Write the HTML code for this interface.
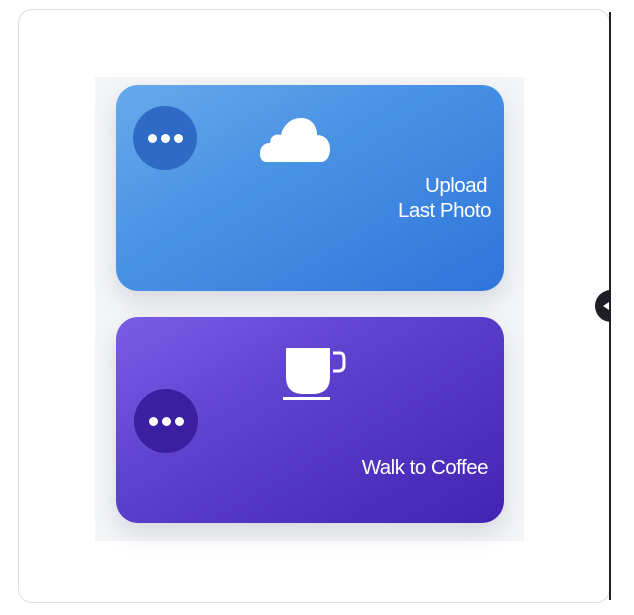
<!DOCTYPE html>
<html><head><meta charset="utf-8"><style>
html,body{margin:0;padding:0;background:#fff;width:634px;height:615px;overflow:hidden;font-family:"Liberation Sans",sans-serif}
.frame{position:absolute;left:18px;top:9px;width:592px;height:594px;border:1px solid #dcdcdc;border-radius:14px;box-sizing:border-box}
.vline{position:absolute;left:609px;top:12px;width:2px;height:588px;background:#222}
.knobwrap{position:absolute;left:595px;top:290px;width:16px;height:32px;overflow:hidden}
.knob{position:absolute;left:0;top:0;width:32px;height:32px;border-radius:50%;background:#1e1e24}
.knob:after{content:"";position:absolute;left:8px;top:12px;border-right:6px solid #fff;border-top:4px solid transparent;border-bottom:4px solid transparent}
.bg{position:absolute;left:95px;top:77px;width:429px;height:464px;background:#f4f5f7}
.card{position:absolute;left:116px;width:388px;height:206px;border-radius:22px;box-shadow:0 10px 24px rgba(80,90,120,.18);color:#fff}
.c1{top:85px;background:linear-gradient(150deg,#67a9ea 0%,#4691e4 45%,#2f74da 100%)}
.c2{top:317px;background:linear-gradient(150deg,#7a5ce6 0%,#5a3fcc 45%,#4323b2 100%)}
.dots{position:absolute;width:64px;height:64px;border-radius:50%;display:flex;align-items:center;justify-content:center;gap:4px}
.dots i{width:9px;height:9px;border-radius:50%;background:#fff;display:block}
.t{position:absolute;right:14px;text-align:right;font-size:20.5px;line-height:25px;letter-spacing:-.5px}
</style></head><body>
<div class="frame"></div>
<div class="bg"></div>
<div class="card c1">
  <div class="dots" style="left:17px;top:21px;background:#2f6ac6"><i></i><i></i><i></i></div>
  <svg style="position:absolute;left:143px;top:30px" width="72" height="48" viewBox="0 0 72 48"><path d="M8 47 C2 47 1 42 1 38 C1 32 5 28 11 28 C11 22 16 18 22 20 C24 10 32 3 42 3 C52 3 58 10 58 20 C66 20 71 26 71 34 C71 42 67 47 62 47 Z" fill="#fff"/></svg>
  <div class="t" style="top:88px;right:17px">Upload</div>
  <div class="t" style="top:113px;right:13px">Last Photo</div>
</div>
<div class="card c2">
  <div class="dots" style="left:18px;top:72px;background:#3a1fa0"><i></i><i></i><i></i></div>
  <svg style="position:absolute;left:167px;top:30px" width="66" height="54" viewBox="0 0 66 54"><path d="M3 1 H47 V30 C47 41 41 47 30 47 H20 C9 47 3 41 3 30 Z" fill="#fff"/><path d="M50 6 H57 C61 6 61 10 61 14 V18 C61 22 59 24 55 24 H50" fill="none" stroke="#fff" stroke-width="3"/><rect x="0" y="50" width="47" height="3" fill="#fff"/></svg>
  <div class="t" style="top:138px;right:16px">Walk to Coffee</div>
</div>
<div class="vline"></div>
<div class="knobwrap"><div class="knob"></div></div>
</body></html>
